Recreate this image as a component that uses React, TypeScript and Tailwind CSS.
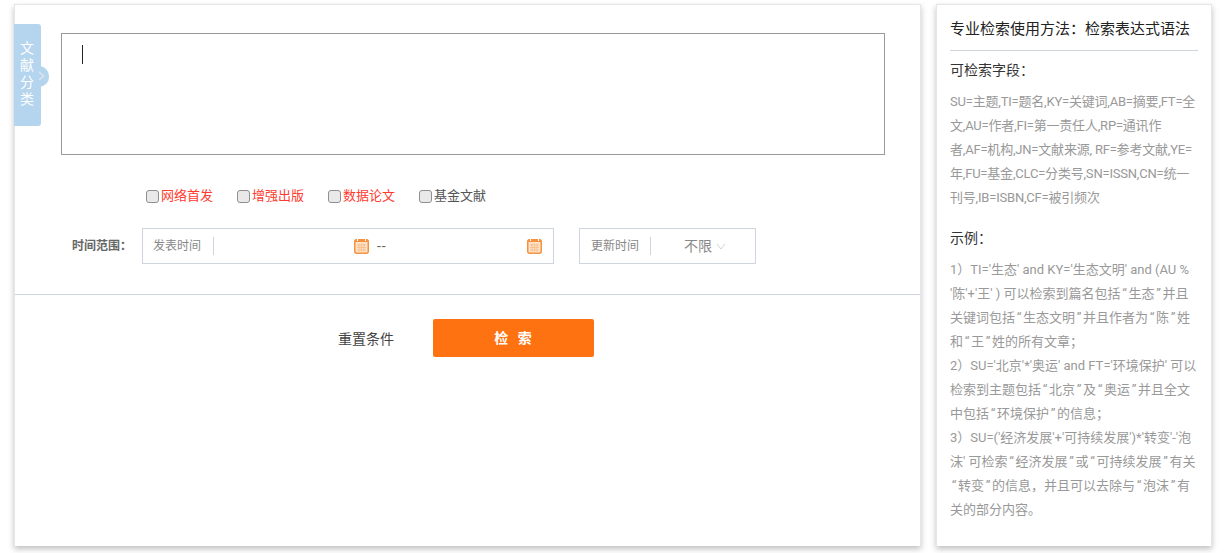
const font = { fontFamily: 'Roboto,"Noto Sans CJK SC",sans-serif' };

function Cal() {
  return (
    <svg width="15" height="16" viewBox="0 0 15 16" className="shrink-0">
      <rect x="0.75" y="1.75" width="13.5" height="13.5" rx="2" fill="#fde3c8" stroke="#f6913f" strokeWidth="1.5" />
      <rect x="1" y="1.5" width="13" height="2.5" fill="#f6913f" />
      <path d="M3.5 0.5v2.5M11.5 0.5v2.5" stroke="#fff" strokeWidth="1" />
      <path d="M3 7h9M3 9.5h9M3 12h9M5 5.5v8M7.5 5.5v8M10 5.5v8" stroke="#f8b57f" strokeWidth="0.7" />
    </svg>
  );
}

function Check({ label, red }: { label: string; red?: boolean }) {
  return (
    <div className={`flex items-center gap-[2px] text-[13px] leading-[20px] ${red ? "text-[#ff3b2f]" : "text-[#555]"}`}>
      <span className="w-[13px] h-[13px] rounded-[3px] border border-[#8f8f8f] bg-[#e9e9e9]" />
      <span>{label}</span>
    </div>
  );
}

function Line({ text }: { text: string }) {
  const parts = text.split(/([“”])/);
  return (
    <div>
      {parts.map((p, i) =>
        p === "“" || p === "”" ? (
          <span key={i} className="inline-block w-[8px] text-center">{p}</span>
        ) : (
          <span key={i}>{p}</span>
        )
      )}
    </div>
  );
}

const fields = [
  "SU=主题,TI=题名,KY=关键词,AB=摘要,FT=全",
  "文,AU=作者,FI=第一责任人,RP=通讯作",
  "者,AF=机构,JN=文献来源, RF=参考文献,YE=",
  "年,FU=基金,CLC=分类号,SN=ISSN,CN=统一",
  "刊号,IB=ISBN,CF=被引频次",
];

const examples = [
  "1）TI='生态' and KY='生态文明' and (AU %",
  "'陈'+'王' ) 可以检索到篇名包括“生态”并且",
  "关键词包括“生态文明”并且作者为“陈”姓",
  "和“王”姓的所有文章；",
  "2）SU='北京'*'奥运' and FT='环境保护' 可以",
  "检索到主题包括“北京”及“奥运”并且全文",
  "中包括“环境保护”的信息；",
  "3）SU=('经济发展'+'可持续发展')*'转变'-'泡",
  "沫' 可检索“经济发展”或“可持续发展”有关",
  "“转变”的信息，并且可以去除与“泡沫”有",
  "关的部分内容。",
];

export default function App() {
  return (
    <div style={font} lang="zh-CN" className="w-[1231px] h-[553px] overflow-hidden bg-white flex gap-[15px] pl-[14px] pt-[4px]">
      <main className="relative w-[907px] h-[542px] bg-white border border-[#e6e6e6] border-b-0 shadow-[0_3px_6px_rgba(0,0,0,0.25)] shrink-0">
        <div className="absolute left-[14px] top-[61px] w-[20px] h-[21px] bg-[#b5d4ee] rounded-full" />
        <div className="absolute left-[-1px] top-[19px] w-[27px] h-[102px] bg-[#b5d4ee] rounded-r-[3px] flex items-center justify-center pr-[4px]">
          <span className="text-white text-[14px] leading-[27px] tracking-[3px] [writing-mode:vertical-lr]">文献分类</span>
        </div>
        <svg width="7" height="10" viewBox="0 0 7 10" className="absolute left-[23px] top-[66px]"><path d="M1 1l4.5 4-4.5 4" fill="none" stroke="#dbe4ec" strokeWidth="1.6" /></svg>

        <div className="ml-[46px] mt-[28px] w-[824px] h-[122px] border border-[#999] pl-[20px] pt-[11px]">
          <div className="w-px h-[19px] bg-[#222]" />
        </div>

        <div className="flex gap-[24px] ml-[131px] mt-[31px]">
          <Check label="网络首发" red />
          <Check label="增强出版" red />
          <Check label="数据论文" red />
          <Check label="基金文献" />
        </div>

        <div className="flex items-center mt-[22px] ml-[57px] h-[36px] text-[12px]">
          <span className="w-[70px] font-bold text-[#666]">时间范围：</span>
          <div className="w-[412px] h-[36px] border border-[#cfd5de] flex items-center pl-[10px] pr-[11px] text-[#888]">
            <span className="pr-[12px] border-r border-[#cfd5de] leading-[18px]">发表时间</span>
            <span className="flex-1" />
            <Cal />
            <span className="ml-[8px] w-[150px] text-[#666] text-[14px] tracking-[1px]">--</span>
            <Cal />
          </div>
          <div className="ml-[25px] w-[177px] h-[36px] border border-[#cfd5de] flex items-center pl-[11px] text-[#888]">
            <span className="pr-[11px] border-r border-[#cfd5de] leading-[18px]">更新时间</span>
            <span className="ml-[33px] text-[14px]">不限</span>
            <svg width="10" height="7" viewBox="0 0 10 7" className="ml-[4px]"><path d="M1 1l4 5 4-5" fill="none" stroke="#cfd5de" strokeWidth="1" /></svg>
          </div>
        </div>

        <div className="h-px bg-[#cfd5de] mt-[30px]" />

        <div className="flex items-center mt-[24px] ml-[323px]">
          <span className="text-[14px] text-[#444] pt-[2px]">重置条件</span>
          <button className="ml-[39px] w-[161px] h-[38px] bg-[#ff7211] rounded-[2px] text-white text-[14px] font-bold tracking-[3px] pl-[2px]">检 索</button>
        </div>
      </main>

      <aside className="w-[276px] h-[542px] bg-white border border-[#e6e6e6] border-b-0 shadow-[0_3px_6px_rgba(0,0,0,0.25)] shrink-0 px-[13px]">
        <h2 className="text-[15px] leading-[20px] text-[#222] font-normal pt-[14px] pb-[11px] border-b border-[#cfd5de]">专业检索使用方法：检索表达式语法</h2>
        <h3 className="text-[14px] leading-[20px] text-[#333] font-normal mt-[9px] mb-[10px]">可检索字段：</h3>
        <div className="text-[13px] leading-[24px] tracking-[-0.2px] text-[#999] whitespace-nowrap">
          {fields.map((l) => <Line key={l} text={l} />)}
        </div>
        <h3 className="text-[14px] leading-[20px] text-[#333] font-normal mt-[18px] mb-[10px]">示例：</h3>
        <div className="text-[13px] leading-[24px] text-[#999] whitespace-nowrap">
          {examples.map((l) => <Line key={l} text={l} />)}
        </div>
      </aside>
    </div>
  );
}
